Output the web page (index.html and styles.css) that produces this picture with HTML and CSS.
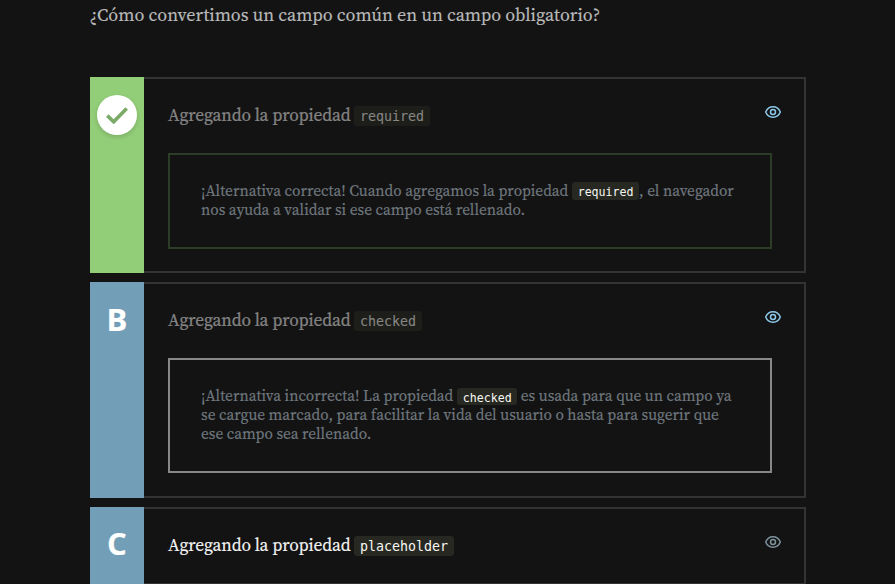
FILE: index.html
```
<!DOCTYPE html>
<html lang="es">
<head>
<meta charset="utf-8">
<title>Actividad</title>
<link rel="stylesheet" href="styles.css">
</head>
<body>
<main class="exercise">
  <h1 class="question">¿Cómo convertimos un campo común en un campo obligatorio?</h1>
  <ul class="options">
    <li class="option option--correct option--seen">
      <div class="letter"><span class="check"><svg width="22" height="17" viewBox="0 0 22 17"><path d="M1.3 8.6 7.7 14.8 20.7 1.4" fill="none" stroke="#7cab68" stroke-width="3.6"/></svg></span></div>
      <div class="content">
        <div class="title"><p class="label"><span class="label-text">Agregando la propiedad</span><code>required</code></p>
          <svg class="eye" width="16" height="12" viewBox="0 0 16 12"><path d="M.7 6C2 2.7 4.6.8 8 .8S14 2.7 15.3 6C14 9.3 11.4 11.2 8 11.2S2 9.3.7 6Z"/><circle cx="8" cy="6" r="2.5"/></svg></div>
        <div class="opinion">¡Alternativa correcta! Cuando agregamos la propiedad<code>required</code>, el navegador<br>nos ayuda a validar si ese campo está rellenado.</div>
      </div>
    </li>
    <li class="option option--wrong option--seen">
      <div class="letter">B</div>
      <div class="content">
        <div class="title"><p class="label"><span class="label-text">Agregando la propiedad</span><code>checked</code></p>
          <svg class="eye" width="16" height="12" viewBox="0 0 16 12"><path d="M.7 6C2 2.7 4.6.8 8 .8S14 2.7 15.3 6C14 9.3 11.4 11.2 8 11.2S2 9.3.7 6Z"/><circle cx="8" cy="6" r="2.5"/></svg></div>
        <div class="opinion">¡Alternativa incorrecta! La propiedad<code>checked</code> es usada para que un campo ya<br>se cargue marcado, para facilitar la vida del usuario o hasta para sugerir que<br>ese campo sea rellenado.</div>
      </div>
    </li>
    <li class="option">
      <div class="letter">C</div>
      <div class="content">
        <div class="title"><p class="label"><span class="label-text">Agregando la propiedad</span><code>placeholder</code></p>
          <svg class="eye" width="16" height="12" viewBox="0 0 16 12"><path d="M.7 6C2 2.7 4.6.8 8 .8S14 2.7 15.3 6C14 9.3 11.4 11.2 8 11.2S2 9.3.7 6Z"/><circle cx="8" cy="6" r="2.5"/></svg></div>
      </div>
    </li>
  </ul>
</main>
</body>
</html>
```

FILE: styles.css
```
* { box-sizing: border-box; }
body {
  margin: 0;
  height: 584px;
  overflow: hidden;
  background: #131313;
  font-family: "Source Serif Pro", "Source Serif 4", "Noto Serif CJK SC", "Liberation Serif", serif;
  -webkit-text-stroke: .15px;
}
.exercise { width: 716px; margin-left: 90px; white-space: nowrap; }
.question { margin: 0; height: 77px; padding-top: 4px; font-size: 18px; line-height: 22px; font-weight: 400; color: #b9b9b9; text-indent: -.5px; }
.options { list-style: none; margin: 0; padding: 0; display: flex; flex-direction: column; gap: 9px; }
.option { display: flex; }
.letter {
  width: 54px;
  flex: none;
  padding-top: 17px;
  display: flex;
  justify-content: center;
  align-items: flex-start;
  background: #729fb7;
  color: #fff;
  font: 700 31px/40px "Open Sans", sans-serif;
}
.option:last-child .letter { padding-top: 16px; }
.option--correct .letter { padding-top: 18px; background: #92cd77; }
.check {
  width: 40px;
  height: 40px;
  border-radius: 50%;
  background: #fff;
  display: flex;
  align-items: center;
  justify-content: center;
  box-shadow: 0 2px 4px rgba(0, 0, 0, .15);
}
.content { flex: 1; border: 2px solid #333; border-left: 0; padding: 0 32px 22px 24px; }
.option--wrong .content { padding-bottom: 23px; }
.option:last-child .content { padding-bottom: 0; }
.title { height: 74px; display: flex; justify-content: space-between; align-items: flex-start; }
.label { margin: 27px 0 0; height: 20px; display: flex; font-size: 17.4px; line-height: 19px; color: #f2f2f2; }
.label-text { width: 186px; letter-spacing: -.13px; }
code { font-family: "DejaVu Sans Mono", monospace; background: #272822; color: #f8f8f2; border-radius: 3px; -webkit-text-stroke: 0; }
.label code { height: 20px; padding: 0 6px; font-size: 13.3px; line-height: 21px; }
.option--seen .label { opacity: .5; }
.eye { margin: 27px -9px 0 0; fill: none; stroke: #7d929d; stroke-width: 1.5; }
.option--seen .eye { stroke: #8cc8ea; }
.opinion { border: 2px solid #888; padding: 26px 0 28px 31px; font-size: 15.3px; line-height: 19px; color: #6f777e; }
.option--correct .opinion { border-color: #2b3d26; }
.opinion code { display: inline-block; height: 18px; margin: 1px 0 -3px 4px; padding: 0 5.5px; font-size: 11.6px; line-height: 20px; vertical-align: top; }
.option--wrong .opinion code { height: 17px; margin-top: 2px; }
```
